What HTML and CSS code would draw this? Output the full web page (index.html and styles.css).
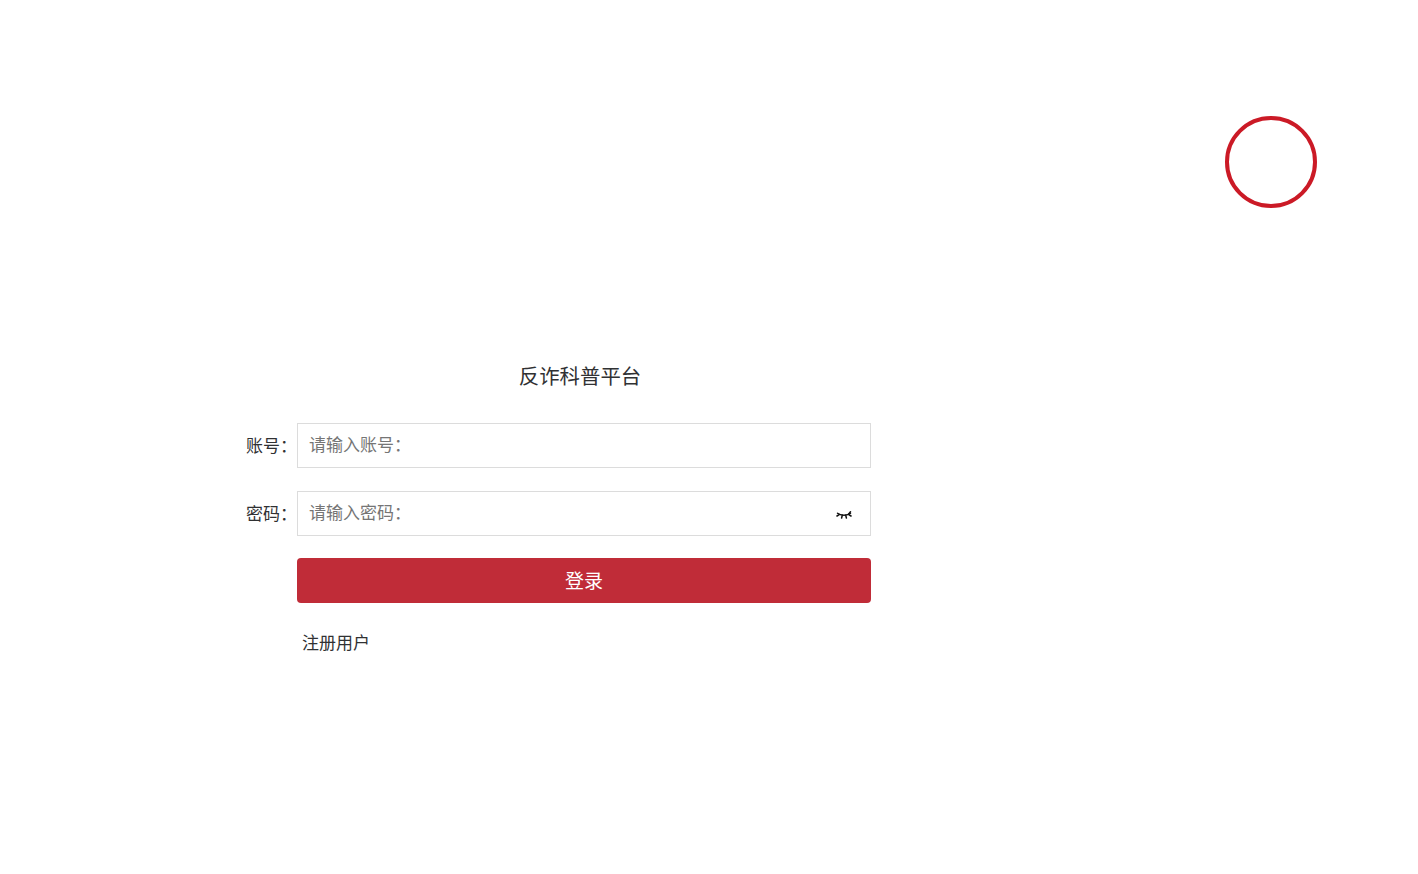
FILE: index.html
```html
<!DOCTYPE html>
<html lang="zh-CN">
<head>
<meta charset="utf-8">
<title>反诈科普平台</title>
<link rel="stylesheet" href="styles.css">
</head>
<body>
<div class="stamp"></div>
<main class="login">
  <h1 class="title">反诈科普平台</h1>
  <form class="form">
    <div class="row">
      <label class="label" for="account">账号：</label>
      <div class="field"><input id="account" class="input" type="text" placeholder="请输入账号："></div>
    </div>
    <div class="row">
      <label class="label" for="password">密码：</label>
      <div class="field">
        <input id="password" class="input" type="password" placeholder="请输入密码：">
        <svg class="eye" width="16" height="8" viewBox="0 0 16 8" fill="none" stroke="#111" stroke-width="1.5" stroke-linecap="round">
          <path d="M1.5 2.2C4.5 4.8 11.5 4.8 14.5 2.2"/>
          <path d="M3.2 3.6L1 5M6.3 4.3L5.6 7M9.7 4.3L10.4 7M12.8 3.6L15 5M12.5 3.2L14.5 .8"/>
        </svg>
      </div>
    </div>
    <button class="submit" type="button">登录</button>
    <a class="register" href="#">注册用户</a>
  </form>
</main>
</body>
</html>
```

FILE: styles.css
```css
* { box-sizing: border-box; }
html, body { margin: 0; height: 100%; background: #fff; }
body {
  font-family: "Noto Sans CJK SC", "Liberation Sans", sans-serif;
  color: #303133;
  font-size: 17px;
}
.stamp {
  position: absolute;
  left: 1225px;
  top: 116px;
  width: 92px;
  height: 92px;
  border: 4.5px solid #cb1a26;
  border-radius: 50%;
  filter: blur(0.5px);
}
.login {
  width: 634px;
  margin-left: 237px;
  padding-top: 359px;
}
.title {
  margin: 0 0 32px 52px;
  font-size: 20.4px;
  font-weight: 400;
  line-height: 32px;
  text-align: center;
  color: #303133;
}
.form { display: flex; flex-direction: column; }
.row {
  display: flex;
  align-items: center;
  height: 45px;
  margin-bottom: 23px;
}
.label { width: 60px; padding-bottom: 2px; text-align: right; white-space: nowrap; }
.field { position: relative; flex: 1; height: 45px; }
.input {
  width: 100%;
  height: 100%;
  padding: 0 11px 5px;
  border: 1px solid #dcdcdc;
  border-radius: 0;
  outline: none;
  font: inherit;
  color: #303133;
}
.input::placeholder { color: #757575; opacity: 1; }
.eye { position: absolute; right: 19px; top: 20px; }
.submit {
  margin: -1px 0 0 60px;
  height: 45px;
  padding: 0 0 2px;
  border: 0;
  border-radius: 4px;
  background: #c02c38;
  color: #fff;
  font: inherit;
  font-size: 19px;
}
.register {
  align-self: flex-start;
  margin: 27px 0 0 65px;
  color: #303133;
  text-decoration: none;
  line-height: 24px;
}
```
